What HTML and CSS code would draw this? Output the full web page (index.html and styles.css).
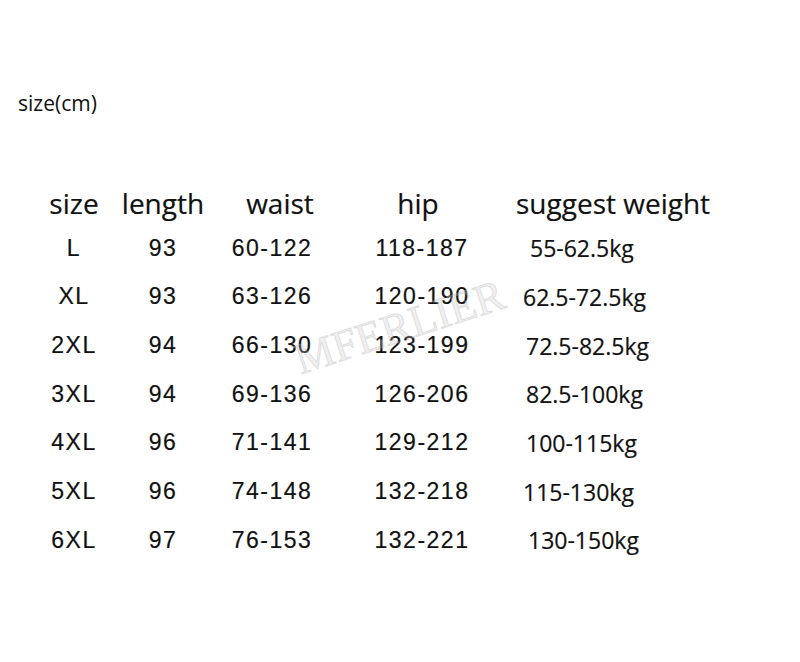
FILE: index.html
```html
<!DOCTYPE html>
<html>
<head>
<meta charset="utf-8">
<link rel="stylesheet" href="styles.css">
</head>
<body>
<div class="page">
  <p class="caption">size(cm)</p>
  <div class="chart">
    <div class="row head">
      <div class="c1">size</div>
      <div class="c2">length</div>
      <div class="c3">waist</div>
      <div class="c4">hip</div>
      <div class="c5">suggest weight</div>
    </div>
    <div class="row">
      <div class="c1">L</div><div class="c2">93</div><div class="c3">60-122</div><div class="c4">118-187</div><div class="c5 w-r4">55-62.5kg</div>
    </div>
    <div class="row">
      <div class="c1">XL</div><div class="c2">93</div><div class="c3">63-126</div><div class="c4">120-190</div><div class="c5 w-l3">62.5-72.5kg</div>
    </div>
    <div class="row">
      <div class="c1">2XL</div><div class="c2">94</div><div class="c3">66-130</div><div class="c4">123-199</div><div class="c5">72.5-82.5kg</div>
    </div>
    <div class="row">
      <div class="c1">3XL</div><div class="c2">94</div><div class="c3">69-136</div><div class="c4">126-206</div><div class="c5">82.5-100kg</div>
    </div>
    <div class="row">
      <div class="c1">4XL</div><div class="c2">96</div><div class="c3">71-141</div><div class="c4">129-212</div><div class="c5">100-115kg</div>
    </div>
    <div class="row">
      <div class="c1">5XL</div><div class="c2">96</div><div class="c3">74-148</div><div class="c4">132-218</div><div class="c5 w-l3">115-130kg</div>
    </div>
    <div class="row">
      <div class="c1">6XL</div><div class="c2">97</div><div class="c3">76-153</div><div class="c4">132-221</div><div class="c5 w-r2">130-150kg</div>
    </div>
  </div>
  <div class="watermark">MFERLIER</div>
</div>
</body>
</html>
```

FILE: styles.css
```css
html, body {
  margin: 0;
  padding: 0;
  background: #ffffff;
}
.page {
  position: relative;
  width: 800px;
  height: 662px;
  overflow: hidden;
  color: #111111;
}
.caption {
  margin: 0;
  padding: 90px 0 0 18px;
  font-family: "Open Sans", "Noto Sans", sans-serif;
  font-size: 21px;
  line-height: 26px;
}
.chart {
  margin-top: 68px;
  padding-left: 30px;
}
.row {
  display: grid;
  grid-template-columns: 88px 90px 128px 172px 1fr;
  height: 48.67px;
  align-items: center;
  font-family: "Liberation Sans", Arial, sans-serif;
  font-size: 23px;
  letter-spacing: 1.5px;
  -webkit-text-stroke: 0.2px #111111;
}
.row > div {
  text-align: center;
  white-space: nowrap;
}
.row > .c5 {
  text-align: left;
  padding-left: 18px;
  font-family: "Open Sans", "Noto Sans", sans-serif;
  font-size: 23px;
  letter-spacing: 0;
}
.row > .w-r4 { padding-left: 22px; }
.row > .w-l3 { padding-left: 15px; }
.row > .w-r2 { padding-left: 20px; }
.row.head {
  box-sizing: border-box;
  height: 40px;
  padding-bottom: 3px;
  font-family: "Open Sans", "Noto Sans", sans-serif;
  font-size: 28px;
  letter-spacing: 0;
}
.row.head > .c3 { padding-left: 16px; }
.row.head > .c4 { padding-right: 8px; }
.row.head > .c5 {
  padding-left: 8px;
  font-size: 28px;
}
.watermark {
  position: absolute;
  left: 303px;
  top: 338px;
  font-family: "Liberation Serif", "Times New Roman", serif;
  font-size: 44px;
  letter-spacing: 0;
  color: rgba(200, 200, 200, 0.3);
  -webkit-text-stroke: 1px rgba(170, 170, 170, 0.3);
  transform: rotate(-18deg);
  transform-origin: left bottom;
  line-height: 1;
  white-space: nowrap;
}
```
